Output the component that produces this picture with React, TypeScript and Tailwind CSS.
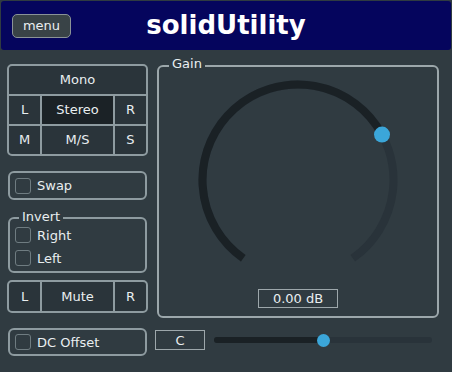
import React from 'react';

const LINE = 'border-[#8e9ba0]';

function Check({ label }: { label: string }) {
  return (
    <div className="flex items-center gap-[6px] h-[16px]">
      <span className="w-[16px] h-[16px] rounded-[3px] border-[1.5px] border-[#6f7c81]" />
      <span className="leading-none">{label}</span>
    </div>
  );
}

function Knob() {
  // angles measured clockwise from the top, radius 95.5 around (100,100)
  const start = 'M 45.22 178.23';
  return (
    <svg width="200" height="200" viewBox="0 0 200 200" className="block mx-auto">
      <path d={`${start} A 95.5 95.5 0 1 1 154.78 178.23`} fill="none" stroke="#29333a" strokeWidth="8" />
      <path d={`${start} A 95.5 95.5 0 1 1 184.0 54.58`} fill="none" stroke="#1a2125" strokeWidth="8" />
      <circle cx="184.0" cy="54.58" r="8" fill="#3ba6d9" />
    </svg>
  );
}

export default function App() {
  return (
    <div className="w-[452px] h-[372px] overflow-hidden bg-[#303b41] text-[#e9eef0] text-[13px] font-['DejaVu_Sans',sans-serif]">
      {/* header */}
      <div className="mx-[1px] pt-[1px]">
        <div className="h-[49px] rounded-[3px] bg-[#05055d] grid grid-cols-[1fr_auto_1fr] items-center">
          <button className="justify-self-start ml-[11px] w-[59px] h-[24px] rounded-[5px] border border-[#8a9397] bg-[#394347] text-[13px] leading-none">
            menu
          </button>
          <div className="text-[26px] font-bold leading-none text-white pb-[2px]">solidUtility</div>
          <div />
        </div>
      </div>

      <div className="flex">
        {/* left column */}
        <div className="ml-[7px] w-[141px] flex flex-col">
          <div className={`mt-[14px] h-[92px] border-2 ${LINE} rounded-[5px] overflow-hidden grid grid-cols-[31px_71px_31px] grid-rows-3 gap-[2px] bg-[#8e9ba0]`}>
            <div className="col-span-3 bg-[#2a343a] flex items-center justify-center">Mono</div>
            <div className="bg-[#2a343a] flex items-center justify-center">L</div>
            <div className="bg-[#1b2226] flex items-center justify-center">Stereo</div>
            <div className="bg-[#2a343a] flex items-center justify-center">R</div>
            <div className="bg-[#2a343a] flex items-center justify-center">M</div>
            <div className="bg-[#2a343a] flex items-center justify-center">M/S</div>
            <div className="bg-[#2a343a] flex items-center justify-center">S</div>
          </div>

          <div className={`mt-[15px] mx-[1px] h-[29px] border-2 ${LINE} rounded-[6px] flex items-center pl-[5px]`}>
            <Check label="Swap" />
          </div>

          <fieldset className={`mt-[10px] mx-[1px] h-[63px] border-2 ${LINE} rounded-[6px]`}>
            <legend className="ml-[9px] px-[3px] leading-[16px]">
              <span className="relative -top-[1px]">Invert</span>
            </legend>
            <div className="flex flex-col gap-[7px] pt-[1px] pl-[5px]">
              <Check label="Right" />
              <Check label="Left" />
            </div>
          </fieldset>

          <div className={`mt-[7px] h-[33px] border-2 ${LINE} rounded-[5px] overflow-hidden grid grid-cols-[31px_71px_31px] gap-[2px] bg-[#8e9ba0]`}>
            <div className="bg-[#2a343a] flex items-center justify-center">L</div>
            <div className="bg-[#2a343a] flex items-center justify-center">Mute</div>
            <div className="bg-[#2a343a] flex items-center justify-center">R</div>
          </div>

          <div className={`mt-[15px] mx-[1px] h-[28px] border-2 ${LINE} rounded-[6px] flex items-center pl-[5px]`}>
            <Check label="DC Offset" />
          </div>
        </div>

        {/* right column */}
        <div className="ml-[7px] flex flex-col">
          <fieldset className="mt-[8px] ml-[2px] w-[282px] h-[260px] border-2 border-[#9ca7ab] rounded-[6px]">
            <legend className="ml-[10px] px-[3px] leading-[16px]">
              <span className="relative -top-[2px]">Gain</span>
            </legend>
            <div className="mt-[6px]">
              <Knob />
            </div>
            <div className="mt-[9px] mx-auto w-[80px] h-[19px] border border-[#9da7ab] flex items-center justify-center leading-none">
              0.00 dB
            </div>
          </fieldset>

          <div className="mt-[12px] flex items-center">
            <div className="w-[50px] h-[20px] border border-[#9da7ab] flex items-center justify-center leading-none">C</div>
            <div className="ml-[9px] w-[218px] h-[6px] rounded-full bg-[#29333a] flex items-center">
              <div className="w-[109px] h-[6px] rounded-full bg-[#1a2125]" />
              <div className="-ml-[6px] w-[13px] h-[13px] rounded-full bg-[#3ba6d9]" />
            </div>
          </div>
        </div>
      </div>
    </div>
  );
}
